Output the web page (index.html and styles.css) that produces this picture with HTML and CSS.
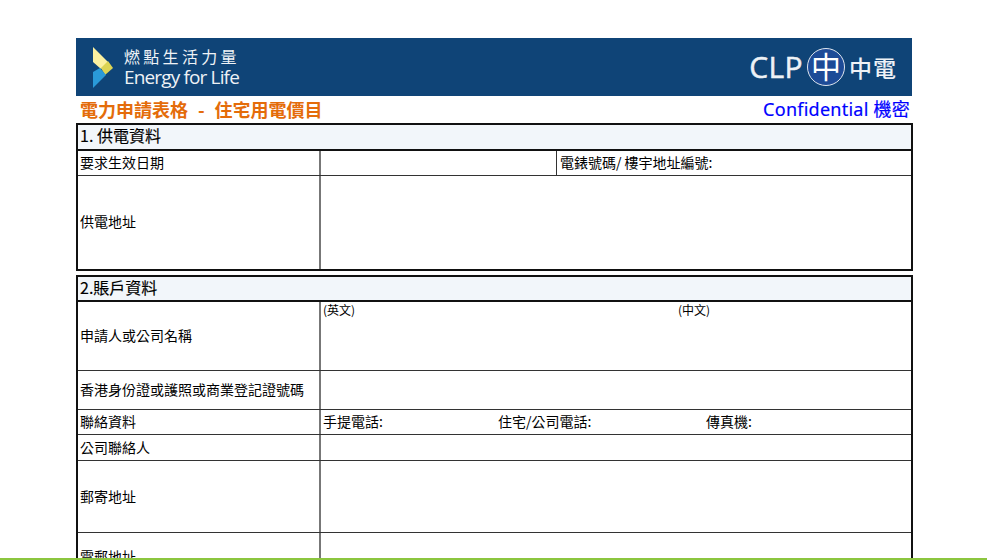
FILE: index.html
```html
<!DOCTYPE html>
<html lang="zh-Hant">
<head>
<meta charset="utf-8">
<title>電力申請表格 - 住宅用電價目</title>
<link rel="stylesheet" href="styles.css">
</head>
<body>
<main class="page">
  <header class="banner">
    <div class="brand">
      <svg class="mark" width="21" height="41" viewBox="0 0 21 41" aria-hidden="true">
        <polygon points="0,0 16,16 8,22 0,15" fill="#fbf0a0"/>
        <polygon points="8,21 15,14 20,21 12,28" fill="#dcd455"/>
        <polygon points="0,25 7,21 13,28 0,41" fill="#2a9ad8"/>
      </svg>
      <div class="brand-text">
        <div class="brand-zh">燃點生活力量</div>
        <div class="brand-en">Energy for Life</div>
      </div>
    </div>
    <div class="clp">
      <span class="clp-name">CLP</span>
      <span class="clp-seal">中</span>
      <span class="clp-zh">中電</span>
    </div>
  </header>
  <div class="title-row">
    <h1 class="title">電力申請表格 &nbsp;-&nbsp; 住宅用電價目</h1>
    <div class="confidential">Confidential 機密</div>
  </div>

  <section class="panel">
    <h2 class="panel-head">1. 供電資料</h2>
    <div class="row row-1a">
      <div class="cell">要求生效日期</div>
      <div class="cell"></div>
      <div class="cell meter">電錶號碼/ 樓宇地址編號:</div>
    </div>
    <div class="row row-1b">
      <div class="cell">供電地址</div>
      <div class="cell"></div>
    </div>
  </section>

  <section class="panel panel-2">
    <h2 class="panel-head">2.賬戶資料</h2>
    <div class="row row-name">
      <div class="cell">申請人或公司名稱</div>
      <div class="cell names">
        <span class="small">(英文)</span>
        <span class="small">(中文)</span>
      </div>
    </div>
    <div class="row row-id">
      <div class="cell">香港身份證或護照或商業登記證號碼</div>
      <div class="cell"></div>
    </div>
    <div class="row row-contact">
      <div class="cell">聯絡資料</div>
      <div class="cell contacts">
        <span>手提電話:</span>
        <span>住宅/公司電話:</span>
        <span>傳真機:</span>
      </div>
    </div>
    <div class="row row-person">
      <div class="cell">公司聯絡人</div>
      <div class="cell"></div>
    </div>
    <div class="row row-post">
      <div class="cell">郵寄地址</div>
      <div class="cell"></div>
    </div>
    <div class="row row-email">
      <div class="cell">電郵地址</div>
      <div class="cell"></div>
    </div>
  </section>
</main>
<div class="green-bar"></div>
</body>
</html>
```
FILE: styles.css
```css
* { box-sizing: border-box; }
html, body { margin: 0; height: 100%; overflow: hidden; background: #fff; }
body {
  font-family: "Noto Sans CJK TC", "Noto Sans", sans-serif;
  color: #000;
  font-size: 14px;
}
.page { width: 837px; margin-left: 76px; padding-top: 38px; }

.banner {
  width: 836px;
  height: 58px;
  background: #0f4477;
  display: flex;
  align-items: center;
  justify-content: space-between;
  padding: 0 15px 0 17px;
  color: #eef2f6;
}
.brand { display: flex; align-items: center; gap: 11px; }
.mark { display: block; margin-top: 1px; }
.brand-text { display: flex; flex-direction: column; margin-left: -1px; padding-top: 2px; }
.brand-zh { font-size: 16px; line-height: 19px; letter-spacing: 3.3px; white-space: nowrap; }
.brand-en { font-family: "Open Sans", sans-serif; font-size: 19px; line-height: 23px; letter-spacing: -0.85px; white-space: nowrap; }
.clp { display: flex; align-items: center; }
.clp-name { font-family: "Open Sans", sans-serif; font-size: 30px; line-height: 32px; letter-spacing: 0.4px; -webkit-text-stroke: 0.5px #eef2f6; }
.clp-seal {
  width: 38px;
  height: 38px;
  border-radius: 50%;
  border: 1.5px solid #dfe6ee;
  background: #1d4b97;
  color: #fff;
  font-size: 30px;
  line-height: 33px;
  text-align: center;
  font-weight: 400;
  margin: 0 4px;
}
.clp-zh { font-size: 23px; line-height: 30px; font-weight: 500; letter-spacing: 1px; }

.title-row {
  height: 27px;
  display: flex;
  align-items: center;
  justify-content: space-between;
  padding: 0 3px 0 4px;
}
.title { margin: 0; font-size: 18px; line-height: 25px; font-weight: 700; color: #e46c0a; white-space: pre; word-spacing: 0.9px; }
.confidential { font-size: 18px; line-height: 25px; color: #0000ff; font-weight: 400; letter-spacing: 0.25px; font-family: "Noto Sans", "Noto Sans CJK TC", sans-serif; -webkit-text-stroke: 0.2px #0000ff; }

.panel { border: 2px solid #111; width: 837px; }
.panel-2 { margin-top: 4px; }
.panel-head {
  margin: 0;
  height: 26px;
  padding: 0 2px;
  background: #f2f6fa;
  border-bottom: 2px solid #111;
  font-size: 16px;
  font-weight: 400;
  line-height: 21px;
  -webkit-text-stroke: 0.15px #000;
}
.panel-2 .panel-head { height: 25px; }
.row {
  display: grid;
  grid-template-columns: 241px 1fr;
  border-bottom: 1px solid #333;
}
.row:last-child { border-bottom: 0; }
.cell {
  padding: 0 2px 3px;
  display: flex;
  align-items: center;
  border-left: 1px solid #333;
  line-height: 20px;
  white-space: nowrap;
}
.cell:first-child { border-left: 0; }
.cell:nth-child(2) { border-left: 2px solid #777; }
.row-1a { grid-template-columns: 241px 237px 1fr; height: 25px; }
.meter { padding-left: 3px; }
.row-1b { height: 93px; }
.row-name { height: 69px; }
.row-id { height: 39px; }
.row-contact { height: 25px; }
.row-person { height: 26px; }
.row-person .cell { padding-bottom: 2px; }
.row-post { height: 72px; }
.row-post .cell { padding-bottom: 1px; }
.row-email { height: 40px; }
.row-email .cell { align-items: flex-start; padding-top: 13px; }

.names { align-items: flex-start; }
.small { font-size: 12px; line-height: 14px; width: 355px; flex: none; margin-top: 1px; }
.contacts { padding-left: 2px; }
.contacts span:nth-child(1) { width: 175px; flex: none; }
.contacts span:nth-child(2) { width: 208px; flex: none; }

.green-bar {
  position: fixed;
  left: 0;
  right: 0;
  bottom: 0;
  height: 2px;
  background: #8cc63f;
}
```
